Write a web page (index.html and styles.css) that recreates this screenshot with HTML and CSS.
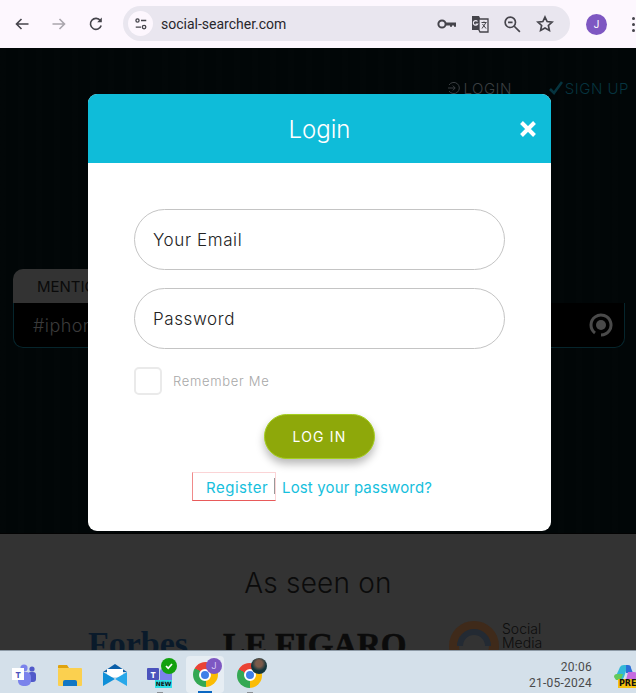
FILE: index.html
```html
<!DOCTYPE html>
<html lang="en">
<head>
<meta charset="utf-8">
<title>Social Searcher Login</title>
<link rel="stylesheet" href="styles.css">
</head>
<body>
<div class="app">
  <header class="browser">
    <div class="nav">
      <svg class="ico" viewBox="0 0 16 16"><path d="M14.5 8H2.5M7.5 3 2.5 8l5 5" class="s"/></svg>
      <svg class="ico dim" viewBox="0 0 16 16"><path d="M1.5 8h12M8.5 3l5 5-5 5" class="s"/></svg>
      <svg class="ico" viewBox="0 0 16 16"><path d="M13.2 9.5A5.5 5.5 0 1 1 12.4 4.6" class="s"/><path d="M13.8 1.6v4.6H9.2z" class="f"/></svg>
    </div>
    <div class="omni">
      <span class="tune"><svg viewBox="0 0 16 16" width="14" height="14"><circle cx="4" cy="4" r="1.8" class="s2"/><path d="M8 4h6M2 11.5h6" class="s2"/><circle cx="11.5" cy="11.5" r="2" class="s2"/></svg></span>
      <span class="url">social-searcher.com</span>
      <div class="omni-icons">
        <svg class="oi key" viewBox="0 0 20 12"><circle cx="5" cy="6" r="3.6" fill="none" stroke="#45444b" stroke-width="2"/><path d="M8.6 4.4h10.4v4.4h-2v-1.4h-2v1.4h-2V7.6H8.6z" class="f"/></svg>
        <svg class="oi trans" viewBox="0 0 18 18"><path d="M1 1h7l1 2v12H1z" class="f"/><path d="M8 4h9v13H9l-1-2z" fill="#e9e6ef" stroke="#45444b" stroke-width="1.3"/><path d="M10.5 7.5h5M13 6.5v1M11 13.5l4-6M11.5 9l3.5 4.5" class="s3"/><path d="M6.5 6.5A2.3 2.3 0 1 0 6.7 9H4.6" fill="none" stroke="#e9e6ef" stroke-width="1.2"/></svg>
        <svg class="oi zoom" viewBox="0 0 16 16"><circle cx="6.5" cy="6.5" r="4.6" class="s2"/><path d="M10 10l5 5M4.5 6.5h4" class="s2"/></svg>
        <svg class="oi star" viewBox="0 0 16 16"><path d="M8 1.8l1.9 4 4.4.5-3.3 3 .9 4.4L8 11.5l-3.9 2.2.9-4.4-3.3-3 4.4-.5z" class="s2"/></svg>
      </div>
    </div>
    <span class="avatar">J</span>
    <span class="dots"><i></i><i></i><i></i></span>
  </header>

  <main class="page">
    <section class="hero">
      <nav class="topnav">
        <a class="toplink login"><svg viewBox="0 0 14 14" width="14" height="14"><path d="M2 4a5.6 5.6 0 1 1 0 6M1 7h7M5.8 4.6 8.2 7l-2.4 2.4" fill="none" stroke="#3b3f42" stroke-width="1"/></svg>LOGIN</a>
        <a class="toplink signup"><svg viewBox="0 0 14 14" width="14" height="14"><path d="M1 8l4 4 8-11" fill="none" stroke="#06343f" stroke-width="2.6"/></svg>SIGN UP</a>
      </nav>
      <div class="searchbox">
        <div class="tab">MENTIONS</div>
        <div class="field">
          <span class="query">#iphone</span>
          <svg class="spinner" viewBox="0 0 24 24" width="24" height="24"><path d="M6 20A10 10 0 1 1 12 22" fill="none" stroke="#4a4a4a" stroke-width="3"/><circle cx="12" cy="12" r="5" fill="#4a4a4a"/></svg>
        </div>
      </div>
    </section>
    <section class="seen">
      <h2 class="seen-title">As seen on</h2>
      <div class="logos">
        <span class="logo forbes">Forbes</span>
        <span class="logo figaro">LE FIGARO</span>
        <span class="smt">
          <svg viewBox="0 0 52 52" width="52" height="52"><circle cx="26" cy="26" r="20" fill="none" stroke="#3f2a1a" stroke-width="10"/><path d="M12 26A14 14 0 0 1 40 26" fill="none" stroke="#232a33" stroke-width="6"/></svg>
          <span class="smt-text">Social<br>Media</span>
        </span>
      </div>
    </section>

    <div class="modal">
      <div class="modal-head">
        <h1 class="modal-title">Login</h1>
        <svg class="close" viewBox="0 0 18 18" width="18" height="18"><path d="M2.5 2.5l13 13M15.5 2.5l-13 13" fill="none" stroke="#fff" stroke-width="4"/></svg>
      </div>
      <form class="modal-body">
        <div class="input">Your Email</div>
        <div class="input">Password</div>
        <label class="remember"><span class="check"></span><span class="remember-text">Remember Me</span></label>
        <button class="submit" type="button">LOG IN</button>
        <div class="links">
          <a class="register">Register</a>
          <a class="lost">Lost your password?</a>
        </div>
      </form>
    </div>
  </main>

  <footer class="taskbar">
    <div class="apps">
      <span class="app-slot">
        <svg viewBox="0 0 26 26" width="26" height="26"><circle cx="20" cy="7" r="2.6" fill="#5059c9"/><rect x="16" y="10" width="8" height="10" rx="3" fill="#5059c9"/><circle cx="12" cy="6" r="3.6" fill="#7b83eb"/><rect x="6" y="10" width="13" height="14" rx="5" fill="#7b83eb"/><rect x="0" y="6" width="12" height="12" fill="#fff"/><text x="6" y="15.5" class="t-letter" fill="#4b53bc">T</text></svg>
      </span>
      <span class="app-slot">
        <svg viewBox="0 0 26 24" width="26" height="24"><path d="M1 3q0-1 1-1h8l2 3h-11z" fill="#e0a30e"/><rect x="1" y="5" width="24" height="18" rx="1" fill="#fbd04f"/><path d="M6 23v-4q0-2 2-2h10q2 0 2 2v4z" fill="#1277c4"/></svg>
      </span>
      <span class="app-slot">
        <svg viewBox="0 0 26 24" width="26" height="24"><path d="M13 1 25 9H1z" fill="#0a5ea8"/><path d="M5 6h16v8H5z" fill="#fff"/><path d="M1 9l12 7 12-7v14z" fill="#28a8ea"/><path d="M1 9l12 7-12 7z" fill="#0f8fd8"/></svg>
      </span>
      <span class="app-slot teams">
        <svg viewBox="0 0 26 20" width="26" height="20"><rect x="13" y="4" width="12" height="14" rx="2" fill="#7b83eb"/><rect x="0" y="3" width="12" height="12" rx="1" fill="#4b53bc"/><text x="6" y="12.5" class="t-letter" fill="#fff">T</text></svg>
        <span class="tick"><svg viewBox="0 0 10 10" width="10" height="10"><path d="M2 5l2.2 2.2L8 3" fill="none" stroke="#fff" stroke-width="1.7"/></svg></span>
        <span class="new">NEW</span>
        <span class="pip"></span>
      </span>
      <span class="app-slot active">
        <span class="chrome"><span class="chrome-eye"></span></span>
        <span class="badge badge-j">J</span>
        <span class="underline"></span>
      </span>
      <span class="app-slot">
        <span class="chrome"><span class="chrome-eye"></span></span>
        <span class="badge badge-photo"></span>
        <span class="pip"></span>
      </span>
    </div>
    <div class="clock"><span>20:06</span><span>21-05-2024</span></div>
    <span class="copilot">
      <svg viewBox="0 0 24 20" width="24" height="20"><path d="M3 12 7 3q1-2 4-2h4l-4 12q-1 3-4 3H3z" fill="#32b8d8"/><path d="M1 13q0-3 3-3h6l-2 6H3z" fill="#63c95b"/><path d="M13 1h2q3 0 3 3l2 5h-7z" fill="#2a6fd8"/><path d="M15 8h6q3 0 3 3v5H13z" fill="#c56be0"/></svg>
      <span class="pre">PRE</span>
    </span>
  </footer>
</div>
</body>
</html>
```
FILE: styles.css
```css
* { box-sizing: border-box; margin: 0; padding: 0; }
html, body { width: 636px; height: 693px; overflow: hidden; }
body { font-family: "Inter", "Open Sans", sans-serif; background: #000; }
a { text-decoration: none; }

.app { width: 636px; height: 693px; display: flex; flex-direction: column; overflow: hidden; }

/* Browser chrome */
.browser { flex: 0 0 48px; height: 48px; background: #fdf7fe; display: flex; align-items: center; padding: 0 0 0 14px; }
.nav { display: flex; align-items: center; gap: 21px; width: 109px; }
.ico { width: 16px; height: 16px; flex: none; }
.ico.dim { opacity: .45; }
.s { fill: none; stroke: #45444b; stroke-width: 1.6; }
.s2 { fill: none; stroke: #45444b; stroke-width: 1.5; }
.s3 { fill: none; stroke: #45444b; stroke-width: 1; }
.f { fill: #45444b; }
.omni { width: 447px; height: 35px; margin-top: -1px; background: #e9e6ef; border-radius: 18px; display: flex; align-items: center; padding: 0 16px 0 5px; }
.tune { width: 25px; height: 25px; border-radius: 50%; background: #fdf7fe; display: flex; align-items: center; justify-content: center; flex: none; }
.url { margin-left: 8px; font-family: "Roboto", sans-serif; font-size: 14px; color: #28272c; }
.omni-icons { margin-left: auto; display: flex; align-items: center; gap: 14px; }
.oi { display: block; flex: none; }
.key { width: 20px; height: 12px; }
.trans { width: 18px; height: 18px; }
.zoom { width: 18px; height: 18px; }
.star { width: 18px; height: 18px; margin-left: 1px; }
.avatar { margin-left: 16px; width: 21px; height: 21px; border-radius: 50%; background: #7e57c2; color: #fff; font-family: "Roboto", sans-serif; font-size: 10px; display: flex; align-items: center; justify-content: center; flex: none; }
.dots { margin-left: 25px; display: flex; flex-direction: column; gap: 3px; flex: none; }
.dots i { width: 3px; height: 3px; border-radius: 50%; background: #45444b; display: block; }

/* Page */
.page { flex: 0 0 602px; height: 602px; position: relative; overflow: hidden; }
.hero { height: 486px; background-color: #010607; background-image: repeating-linear-gradient(90deg, rgba(255,255,255,.005) 0 6px, transparent 6px 18px); border-bottom: 1px solid #020202; padding: 30px 7px 0 13px; display: flex; flex-direction: column; }
.topnav { display: flex; justify-content: flex-end; gap: 37px; height: 20px; align-items: center; font-size: 15px; font-weight: 300; letter-spacing: .5px; }
.toplink { display: flex; align-items: center; gap: 2px; }
.login { color: #3b3f42; }
.signup { color: #06343f; }
.searchbox { margin-top: 171px; width: 612px; height: 80px; }
.tab { width: 150px; height: 34px; background: #333; border-radius: 10px 0 0 0; color: #0a0a0a; font-size: 15px; padding: 8px 0 0 24px; }
.field { height: 45px; display: flex; align-items: center; justify-content: space-between; padding: 0 11px 0 19px; background: #000; border: 1px solid #06252c; border-top: 0; border-radius: 0 0 10px 10px; }
.query { color: #3a3a3a; font-size: 18px; font-weight: 300; letter-spacing: .4px; }
.seen { height: 116px; background: #333; display: flex; flex-direction: column; align-items: center; padding-top: 31px; overflow: hidden; }
.seen-title { font-size: 28px; font-weight: 300; line-height: 36px; color: #0b0b0b; letter-spacing: .2px; }
.logos { display: flex; align-items: flex-start; margin-top: 23px; width: 636px; padding-left: 88px; }
.logo { font-family: "Liberation Serif", serif; font-weight: 700; line-height: 40px; }
.forbes { font-size: 34px; color: #0a1a2a; width: 135px; }
.figaro { font-size: 33px; color: #0b0b0b; width: 228px; padding-top: 1px; -webkit-text-stroke: .6px #0b0b0b; white-space: nowrap; letter-spacing: -.1px; }
.smt { display: flex; position: relative; top: -4px; left: -3px; }
.smt-text { font-size: 14px; line-height: 14px; margin: 2px 0 0 2px; color: #0d0d0d; font-weight: 300; }

/* Modal */
.modal { position: absolute; left: 88px; top: 46px; width: 463px; height: 437px; background: #fff; border-radius: 9px; overflow: hidden; }
.modal-head { height: 69px; background: #0fbcd9; display: flex; align-items: center; justify-content: center; position: relative; }
.modal-title { font-size: 24px; font-weight: 300; color: #fff; margin-top: 1px; }
.close { position: absolute; left: 431px; top: 26px; }
.modal-body { padding: 46px 46px 0; display: flex; flex-direction: column; }
.input { height: 61px; width: 371px; border: 1px solid #c4c4c4; border-radius: 31px; font-size: 17px; font-weight: 300; color: #222; padding: 0 0 0 18px; display: flex; align-items: center; margin-bottom: 18px; letter-spacing: .6px; }
.remember { display: flex; align-items: center; height: 28px; }
.check { width: 28px; height: 28px; border: 2px solid #eaeaea; border-radius: 5px; flex: none; }
.remember-text { margin-left: 11px; font-size: 13px; font-weight: 300; color: #a8a8a8; letter-spacing: .7px; }
.submit { align-self: flex-start; margin: 19px 0 0 130px; width: 111px; height: 45px; border: 1px solid #a5cf1f; border-radius: 23px; background: #8ea80a; color: #fff; font-family: inherit; font-size: 14px; letter-spacing: 1.2px; box-shadow: 0 5px 9px rgba(0,0,0,.28); }
.links { margin: 13px 0 0 58px; display: flex; align-items: center; font-size: 15px; color: #16c0dd; }
.register { width: 84px; height: 29px; border: 1px solid #fbd4d6; border-bottom: 1px solid #e85a5a; border-left-color: #f08a8a; padding-left: 13px; line-height: 29px; letter-spacing: .5px; }
.lost { margin-left: 6px; position: relative; letter-spacing: .15px; top: 1px; }
.lost::before { content: ""; position: absolute; left: -8px; top: 0; width: 1px; height: 16px; background: #999; }

/* Taskbar */
.taskbar { flex: 0 0 43px; height: 43px; background: #d4e0ea; border-top: 1px solid #8d9aa6; display: flex; align-items: flex-start; position: relative; }
.apps { display: flex; margin-left: 2px; width: 500px; }
.app-slot { width: 45px; height: 42px; display: flex; align-items: center; justify-content: center; position: relative; flex: none; padding-top: 6px; }
.t-letter { font: 700 9px "Open Sans", sans-serif; text-anchor: middle; }
.teams .tick { position: absolute; left: 24px; top: 7px; width: 16px; height: 16px; border-radius: 50%; background: #13a10e; display: flex; align-items: center; justify-content: center; }
.new { position: absolute; left: 18px; top: 29px; width: 17px; height: 8px; background: #2fe0e8; color: #111; font: 700 6px/8px "DejaVu Sans", sans-serif; text-align: center; }
.pip { position: absolute; left: 20px; bottom: 0; width: 6px; height: 1px; background: #8a8f94; }
.active { background: #e6edf3; border-radius: 4px; width: 38px; margin: 5px 3px 0 4px; height: 37px; padding-top: 0; }
.chrome { width: 25px; height: 25px; border-radius: 50%; display: flex; align-items: center; justify-content: center; background: conic-gradient(from -60deg, #ea4335 0 120deg, #fbbc04 120deg 240deg, #34a853 240deg 360deg); flex: none; }
.chrome-eye { width: 12px; height: 12px; border-radius: 50%; background: #3f7fe8; border: 2px solid #fff; }
.badge { position: absolute; width: 16px; height: 16px; border-radius: 50%; }
.badge-j { left: 20px; top: 2px; background: #7e57c2; color: #d9c9f5; font: 9px/16px "Roboto", sans-serif; text-align: center; }
.badge-photo { left: 24px; top: 7px; background: radial-gradient(circle at 50% 35%, #7a5a4a 0 25%, #12363c 55%); }
.underline { position: absolute; left: 12px; bottom: 0; width: 14px; height: 2px; background: #0a67c2; }
.clock { position: absolute; right: 44px; top: 8px; display: flex; flex-direction: column; align-items: flex-end; gap: 0; font: 12px/16px "Roboto", sans-serif; color: #4a4a4a; letter-spacing: .25px; }
.copilot { position: absolute; left: 613px; top: 13px; width: 23px; height: 24px; overflow: hidden; }
.copilot svg { display: block; }
.pre { position: absolute; left: 5px; top: 15px; width: 24px; height: 9px; background: #f5c211; color: #111; font: 700 8px/9px "DejaVu Sans", sans-serif; padding-left: 1px; }
```
